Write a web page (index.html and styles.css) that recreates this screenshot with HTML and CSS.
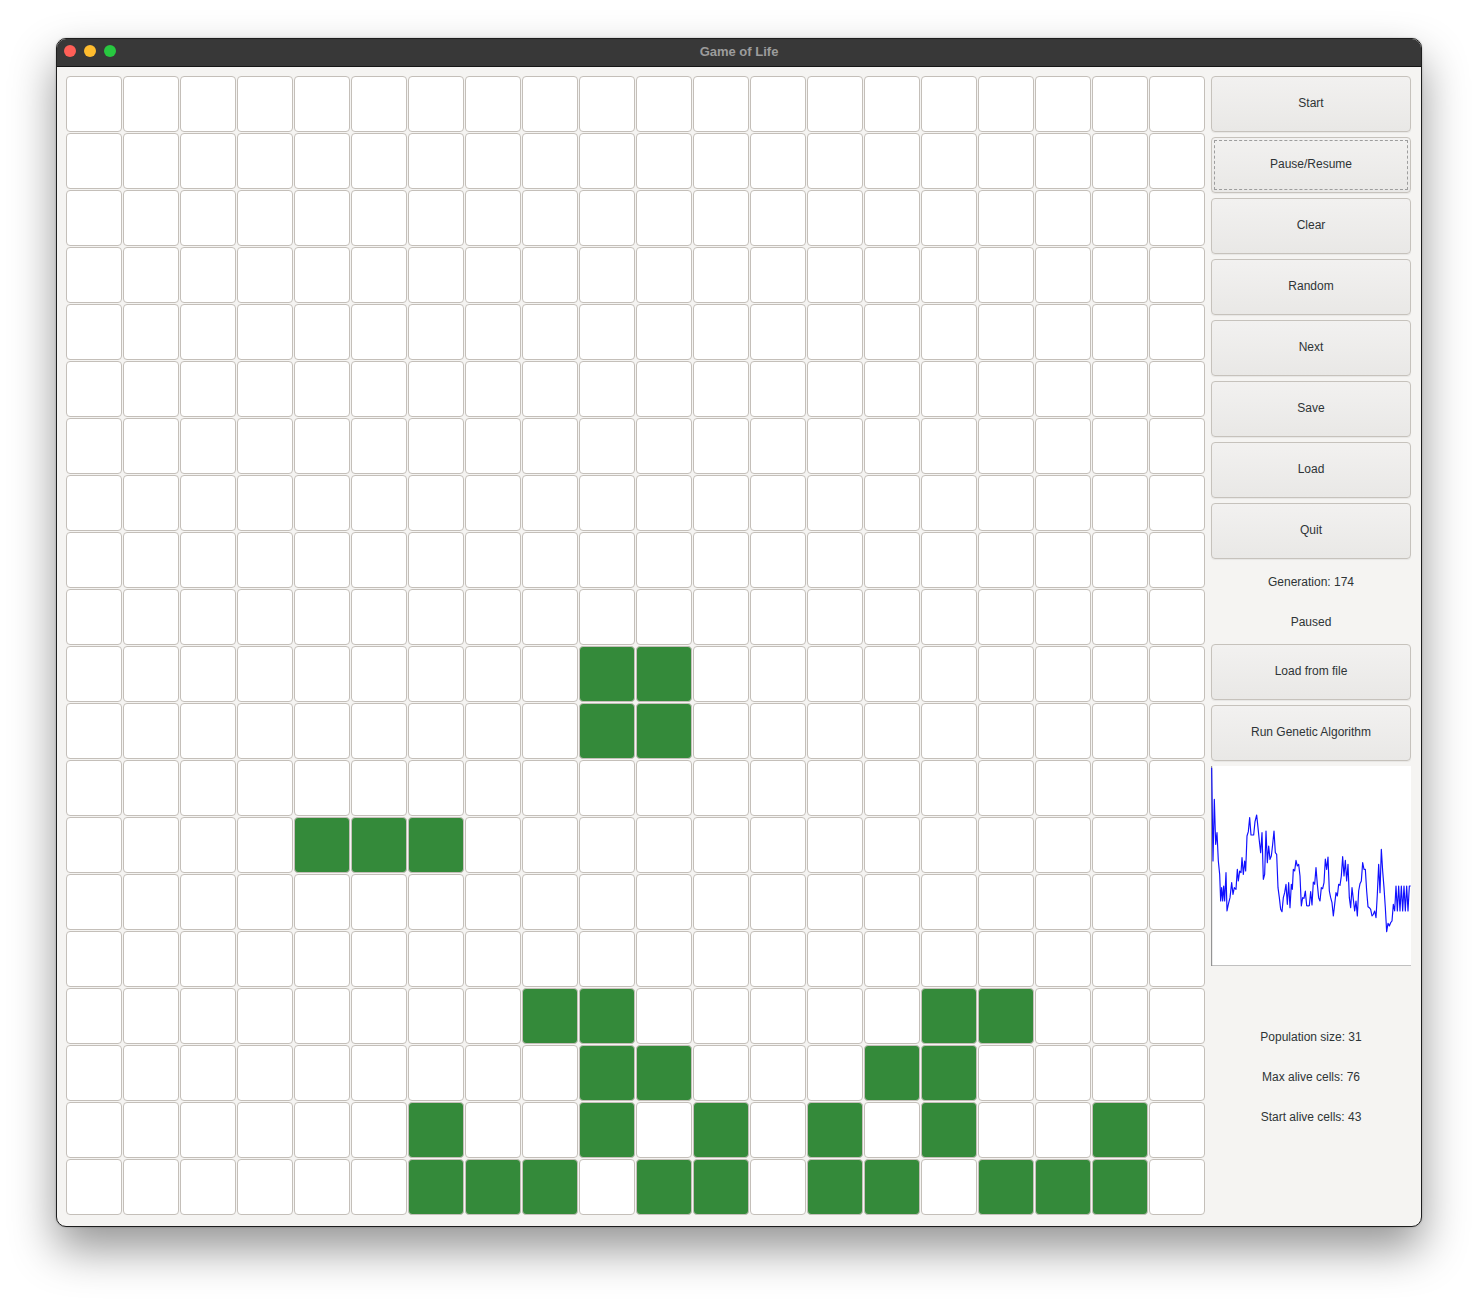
FILE: index.html
```html
<!DOCTYPE html>
<html>
<head>
<meta charset="utf-8">
<title>Game of Life</title>
<link rel="stylesheet" href="styles.css">
</head>
<body>
<div class="window">
  <div class="titlebar">
    <div class="lights">
      <span class="light red"></span>
      <span class="light yellow"></span>
      <span class="light green"></span>
    </div>
    <div class="title">Game of Life</div>
  </div>
  <div class="content">
    <div class="grid">
      <span class="cell"></span><span class="cell"></span><span class="cell"></span><span class="cell"></span><span class="cell"></span><span class="cell"></span><span class="cell"></span><span class="cell"></span><span class="cell"></span><span class="cell"></span><span class="cell"></span><span class="cell"></span><span class="cell"></span><span class="cell"></span><span class="cell"></span><span class="cell"></span><span class="cell"></span><span class="cell"></span><span class="cell"></span><span class="cell"></span>
      <span class="cell"></span><span class="cell"></span><span class="cell"></span><span class="cell"></span><span class="cell"></span><span class="cell"></span><span class="cell"></span><span class="cell"></span><span class="cell"></span><span class="cell"></span><span class="cell"></span><span class="cell"></span><span class="cell"></span><span class="cell"></span><span class="cell"></span><span class="cell"></span><span class="cell"></span><span class="cell"></span><span class="cell"></span><span class="cell"></span>
      <span class="cell"></span><span class="cell"></span><span class="cell"></span><span class="cell"></span><span class="cell"></span><span class="cell"></span><span class="cell"></span><span class="cell"></span><span class="cell"></span><span class="cell"></span><span class="cell"></span><span class="cell"></span><span class="cell"></span><span class="cell"></span><span class="cell"></span><span class="cell"></span><span class="cell"></span><span class="cell"></span><span class="cell"></span><span class="cell"></span>
      <span class="cell"></span><span class="cell"></span><span class="cell"></span><span class="cell"></span><span class="cell"></span><span class="cell"></span><span class="cell"></span><span class="cell"></span><span class="cell"></span><span class="cell"></span><span class="cell"></span><span class="cell"></span><span class="cell"></span><span class="cell"></span><span class="cell"></span><span class="cell"></span><span class="cell"></span><span class="cell"></span><span class="cell"></span><span class="cell"></span>
      <span class="cell"></span><span class="cell"></span><span class="cell"></span><span class="cell"></span><span class="cell"></span><span class="cell"></span><span class="cell"></span><span class="cell"></span><span class="cell"></span><span class="cell"></span><span class="cell"></span><span class="cell"></span><span class="cell"></span><span class="cell"></span><span class="cell"></span><span class="cell"></span><span class="cell"></span><span class="cell"></span><span class="cell"></span><span class="cell"></span>
      <span class="cell"></span><span class="cell"></span><span class="cell"></span><span class="cell"></span><span class="cell"></span><span class="cell"></span><span class="cell"></span><span class="cell"></span><span class="cell"></span><span class="cell"></span><span class="cell"></span><span class="cell"></span><span class="cell"></span><span class="cell"></span><span class="cell"></span><span class="cell"></span><span class="cell"></span><span class="cell"></span><span class="cell"></span><span class="cell"></span>
      <span class="cell"></span><span class="cell"></span><span class="cell"></span><span class="cell"></span><span class="cell"></span><span class="cell"></span><span class="cell"></span><span class="cell"></span><span class="cell"></span><span class="cell"></span><span class="cell"></span><span class="cell"></span><span class="cell"></span><span class="cell"></span><span class="cell"></span><span class="cell"></span><span class="cell"></span><span class="cell"></span><span class="cell"></span><span class="cell"></span>
      <span class="cell"></span><span class="cell"></span><span class="cell"></span><span class="cell"></span><span class="cell"></span><span class="cell"></span><span class="cell"></span><span class="cell"></span><span class="cell"></span><span class="cell"></span><span class="cell"></span><span class="cell"></span><span class="cell"></span><span class="cell"></span><span class="cell"></span><span class="cell"></span><span class="cell"></span><span class="cell"></span><span class="cell"></span><span class="cell"></span>
      <span class="cell"></span><span class="cell"></span><span class="cell"></span><span class="cell"></span><span class="cell"></span><span class="cell"></span><span class="cell"></span><span class="cell"></span><span class="cell"></span><span class="cell"></span><span class="cell"></span><span class="cell"></span><span class="cell"></span><span class="cell"></span><span class="cell"></span><span class="cell"></span><span class="cell"></span><span class="cell"></span><span class="cell"></span><span class="cell"></span>
      <span class="cell"></span><span class="cell"></span><span class="cell"></span><span class="cell"></span><span class="cell"></span><span class="cell"></span><span class="cell"></span><span class="cell"></span><span class="cell"></span><span class="cell"></span><span class="cell"></span><span class="cell"></span><span class="cell"></span><span class="cell"></span><span class="cell"></span><span class="cell"></span><span class="cell"></span><span class="cell"></span><span class="cell"></span><span class="cell"></span>
      <span class="cell"></span><span class="cell"></span><span class="cell"></span><span class="cell"></span><span class="cell"></span><span class="cell"></span><span class="cell"></span><span class="cell"></span><span class="cell"></span><span class="cell live"></span><span class="cell live"></span><span class="cell"></span><span class="cell"></span><span class="cell"></span><span class="cell"></span><span class="cell"></span><span class="cell"></span><span class="cell"></span><span class="cell"></span><span class="cell"></span>
      <span class="cell"></span><span class="cell"></span><span class="cell"></span><span class="cell"></span><span class="cell"></span><span class="cell"></span><span class="cell"></span><span class="cell"></span><span class="cell"></span><span class="cell live"></span><span class="cell live"></span><span class="cell"></span><span class="cell"></span><span class="cell"></span><span class="cell"></span><span class="cell"></span><span class="cell"></span><span class="cell"></span><span class="cell"></span><span class="cell"></span>
      <span class="cell"></span><span class="cell"></span><span class="cell"></span><span class="cell"></span><span class="cell"></span><span class="cell"></span><span class="cell"></span><span class="cell"></span><span class="cell"></span><span class="cell"></span><span class="cell"></span><span class="cell"></span><span class="cell"></span><span class="cell"></span><span class="cell"></span><span class="cell"></span><span class="cell"></span><span class="cell"></span><span class="cell"></span><span class="cell"></span>
      <span class="cell"></span><span class="cell"></span><span class="cell"></span><span class="cell"></span><span class="cell live"></span><span class="cell live"></span><span class="cell live"></span><span class="cell"></span><span class="cell"></span><span class="cell"></span><span class="cell"></span><span class="cell"></span><span class="cell"></span><span class="cell"></span><span class="cell"></span><span class="cell"></span><span class="cell"></span><span class="cell"></span><span class="cell"></span><span class="cell"></span>
      <span class="cell"></span><span class="cell"></span><span class="cell"></span><span class="cell"></span><span class="cell"></span><span class="cell"></span><span class="cell"></span><span class="cell"></span><span class="cell"></span><span class="cell"></span><span class="cell"></span><span class="cell"></span><span class="cell"></span><span class="cell"></span><span class="cell"></span><span class="cell"></span><span class="cell"></span><span class="cell"></span><span class="cell"></span><span class="cell"></span>
      <span class="cell"></span><span class="cell"></span><span class="cell"></span><span class="cell"></span><span class="cell"></span><span class="cell"></span><span class="cell"></span><span class="cell"></span><span class="cell"></span><span class="cell"></span><span class="cell"></span><span class="cell"></span><span class="cell"></span><span class="cell"></span><span class="cell"></span><span class="cell"></span><span class="cell"></span><span class="cell"></span><span class="cell"></span><span class="cell"></span>
      <span class="cell"></span><span class="cell"></span><span class="cell"></span><span class="cell"></span><span class="cell"></span><span class="cell"></span><span class="cell"></span><span class="cell"></span><span class="cell live"></span><span class="cell live"></span><span class="cell"></span><span class="cell"></span><span class="cell"></span><span class="cell"></span><span class="cell"></span><span class="cell live"></span><span class="cell live"></span><span class="cell"></span><span class="cell"></span><span class="cell"></span>
      <span class="cell"></span><span class="cell"></span><span class="cell"></span><span class="cell"></span><span class="cell"></span><span class="cell"></span><span class="cell"></span><span class="cell"></span><span class="cell"></span><span class="cell live"></span><span class="cell live"></span><span class="cell"></span><span class="cell"></span><span class="cell"></span><span class="cell live"></span><span class="cell live"></span><span class="cell"></span><span class="cell"></span><span class="cell"></span><span class="cell"></span>
      <span class="cell"></span><span class="cell"></span><span class="cell"></span><span class="cell"></span><span class="cell"></span><span class="cell"></span><span class="cell live"></span><span class="cell"></span><span class="cell"></span><span class="cell live"></span><span class="cell"></span><span class="cell live"></span><span class="cell"></span><span class="cell live"></span><span class="cell"></span><span class="cell live"></span><span class="cell"></span><span class="cell"></span><span class="cell live"></span><span class="cell"></span>
      <span class="cell"></span><span class="cell"></span><span class="cell"></span><span class="cell"></span><span class="cell"></span><span class="cell"></span><span class="cell live"></span><span class="cell live"></span><span class="cell live"></span><span class="cell"></span><span class="cell live"></span><span class="cell live"></span><span class="cell"></span><span class="cell live"></span><span class="cell live"></span><span class="cell"></span><span class="cell live"></span><span class="cell live"></span><span class="cell live"></span><span class="cell"></span>
    </div>
    <div class="panel">
      <button class="btn">Start</button>
      <button class="btn focused">Pause/Resume</button>
      <button class="btn">Clear</button>
      <button class="btn">Random</button>
      <button class="btn">Next</button>
      <button class="btn">Save</button>
      <button class="btn">Load</button>
      <button class="btn">Quit</button>
      <div class="label">Generation: 174</div>
      <div class="label">Paused</div>
      <button class="btn">Load from file</button>
      <button class="btn">Run Genetic Algorithm</button>
      <div class="chart">
        <svg width="200" height="200" viewBox="18 15 600 600" xmlns="http://www.w3.org/2000/svg">
          <line x1="20" y1="15" x2="20" y2="615" class="axis"/>
          <line x1="20" y1="615" x2="618" y2="615" class="axis"/>
          <polyline class="series" points="20,20 24,300 28,115 32,250 36,215 40,300 44,340 47,420 50,380 53,420 56,375 59,420 63,335 66,450 70,430 75,410 80,365 84,400 88,380 93,385 97,325 100,360 104,330 108,335 111,290 115,340 119,300 122,330 126,225 130,212 134,170 138,222 142,222 146,222 150,182 155,162 159,200 163,240 167,275 171,215 175,355 179,340 183,210 187,305 191,255 195,295 199,285 203,250 207,210 211,275 215,280 219,380 223,410 227,445 231,452 235,410 239,395 243,370 247,430 251,365 255,440 259,370 262,385 265,325 269,330 273,298 277,315 281,310 285,345 289,435 293,410 297,412 301,390 305,434 309,435 313,434 317,392 321,432 325,363 329,370 333,320 337,370 341,410 345,420 349,380 353,383 357,365 361,294 365,325 369,288 373,390 377,410 381,425 385,465 389,430 393,395 397,405 401,370 405,373 409,345 413,287 417,345 421,298 425,360 429,310 433,410 437,440 441,380 445,415 449,450 453,420 457,465 461,390 465,368 469,360 473,305 477,325 481,325 485,390 489,437 493,440 497,445 501,465 505,460 509,450 513,470 517,400 521,310 525,395 529,265 533,330 537,380 541,440 545,512 549,487 553,495 557,485 561,480 565,430 569,450 573,375 577,450 581,375 585,450 589,375 593,450 597,375 601,450 605,375 609,450 613,375 617,375"/>
        </svg>
      </div>
      <div class="stats">
        <div class="label">Population size: 31</div>
        <div class="label">Max alive cells: 76</div>
        <div class="label">Start alive cells: 43</div>
      </div>
    </div>
  </div>
</div>
</body>
</html>
```

FILE: styles.css
```css
* { box-sizing: border-box; }

html, body {
  min-height: 1300px;
}

body {
  margin: 0;
  padding: 38px 0 0 56px;
  background: #ffffff;
  font-family: "Liberation Sans", Arial, sans-serif;
}

.window {
  width: 1366px;
  height: 1189px;
  border: 1px solid #1e1e1e;
  border-radius: 10px;
  overflow: hidden;
  background: #f5f4f2;
  box-shadow: 0 22px 45px rgba(0, 0, 0, 0.42), 0 0 2px rgba(0, 0, 0, 0.3);
}

.titlebar {
  position: relative;
  height: 28px;
  background: #383838;
  border-bottom: 1px solid #151515;
  display: flex;
  align-items: center;
  justify-content: center;
}

.lights {
  position: absolute;
  left: 7px;
  top: 6px;
  display: flex;
  gap: 8px;
}

.light {
  width: 12px;
  height: 12px;
  border-radius: 50%;
}
.red { background: #fe5f57; }
.yellow { background: #febc2e; }
.green { background: #28c840; }

.title {
  color: #9c9c9c;
  font-weight: bold;
  font-size: 13px;
  line-height: 16px;
  margin-top: -1px;
}

.content {
  display: flex;
  gap: 6px;
  padding: 9px 10px 0 9px;
}

.grid {
  display: grid;
  grid-template-columns: repeat(20, 56px);
  grid-auto-rows: 56px;
  gap: 1px;
}

.cell {
  background: #ffffff;
  border: 1px solid #c4bfb9;
  border-radius: 4px;
}

.cell.live {
  background: #348a3a;
}

.panel {
  width: 200px;
  display: flex;
  flex-direction: column;
  gap: 5px;
}

.btn {
  height: 56px;
  width: 200px;
  border: 1px solid #c6c2bc;
  border-radius: 4px;
  background: linear-gradient(#f2f1f0, #e9e8e6);
  font-family: "Liberation Sans", Arial, sans-serif;
  font-size: 12px;
  line-height: 14px;
  color: #2e3436;
  padding: 0 0 2px;
  box-shadow: 0 1px 1px rgba(0, 0, 0, 0.06);
}

.btn.focused {
  outline: 1px dashed #9d9d9d;
  outline-offset: -4px;
}

.label {
  height: 35px;
  display: flex;
  align-items: center;
  justify-content: center;
  font-size: 12px;
  color: #2e3436;
}

.chart {
  width: 200px;
  height: 200px;
  background: #ffffff;
}

.chart svg {
  display: block;
}

.axis {
  stroke: #808080;
  stroke-width: 3;
}

.series {
  fill: none;
  stroke: #1010ff;
  stroke-width: 3.5;
  stroke-linejoin: round;
}

.stats {
  margin-top: 48px;
  display: flex;
  flex-direction: column;
  gap: 5px;
}
```
